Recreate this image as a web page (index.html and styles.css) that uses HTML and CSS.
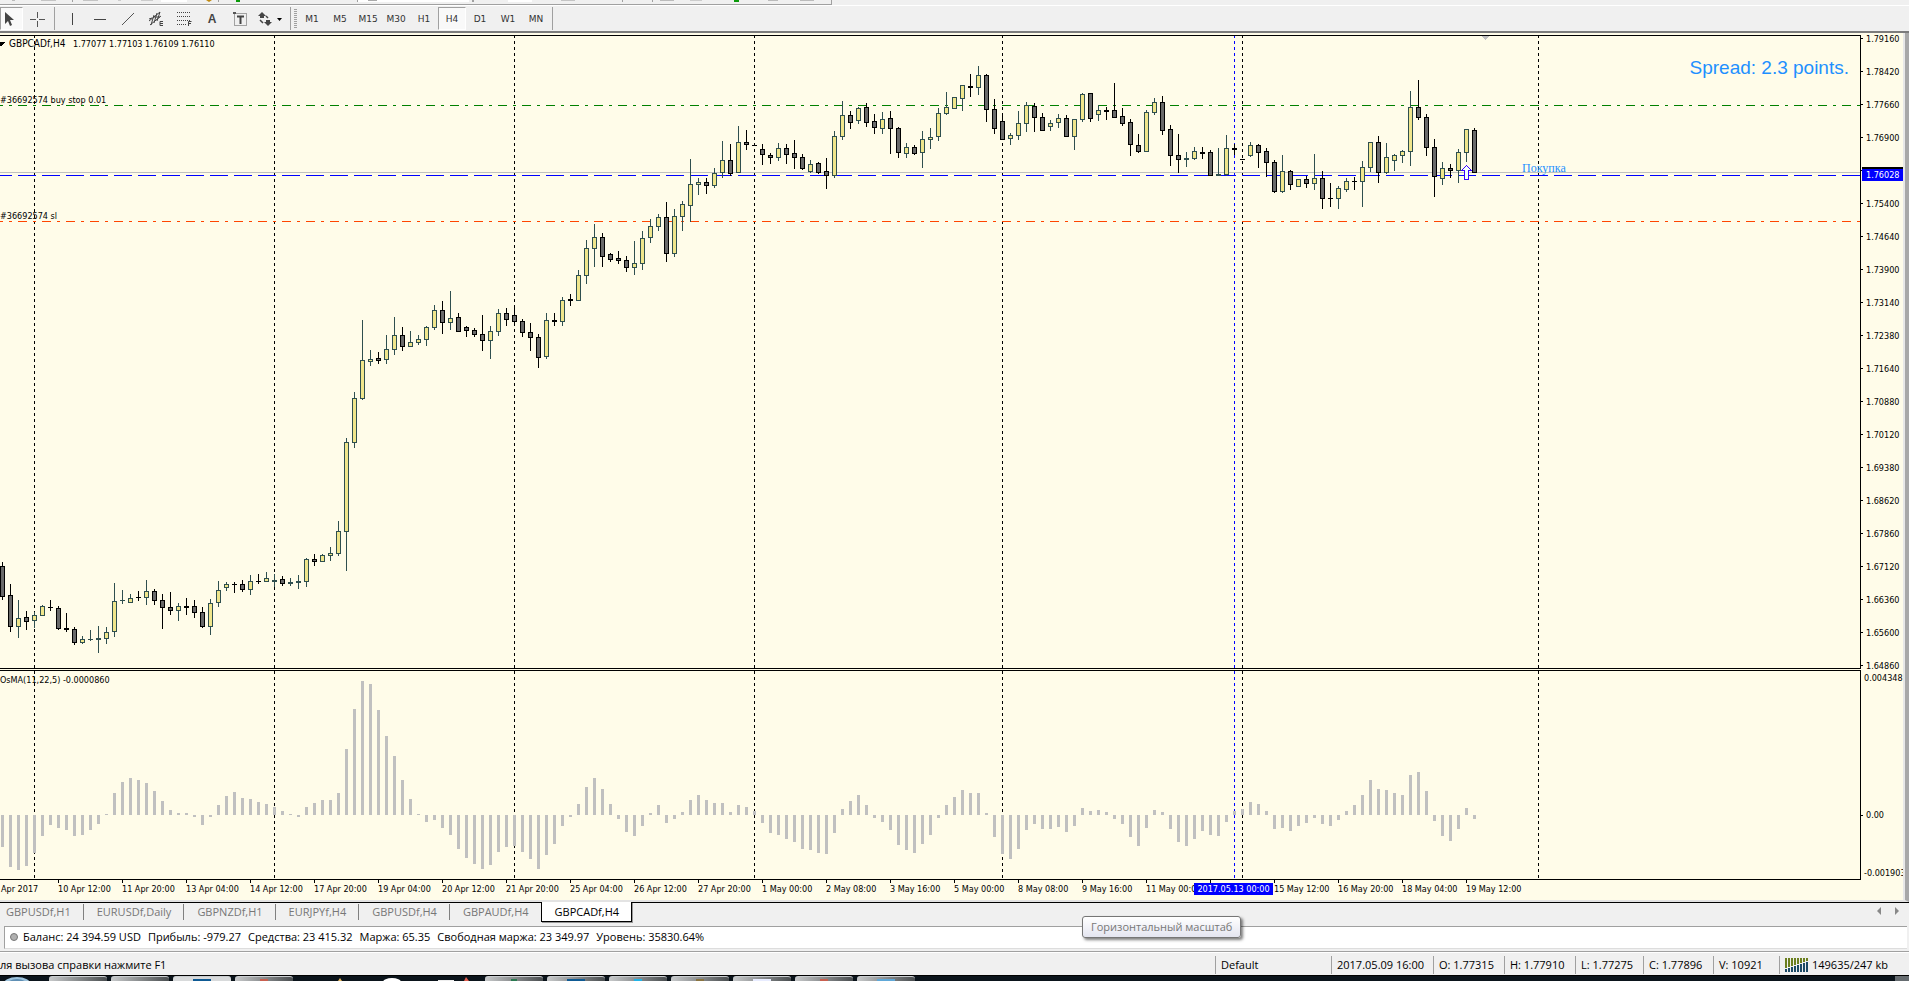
FILE: index.html
```html
<!DOCTYPE html>
<html lang="ru">
<head>
<meta charset="utf-8">
<title>GBPCADf,H4</title>
<link rel="stylesheet" href="styles.css">
</head>
<body>
<div class="upper-bar">
  <svg class="upper-marks" width="832" height="5" aria-hidden="true">
    <rect x="12" y="0" width="3" height="1" fill="#bbb"/><rect x="41" y="0" width="15" height="1" fill="#c4c4c4"/>
    <rect x="72" y="0" width="1" height="2" fill="#a0a0a0"/><rect x="83" y="0" width="15" height="1" fill="#c4c4c4"/>
    <rect x="118" y="0" width="3" height="1" fill="#ccc"/><rect x="141" y="0" width="12" height="1" fill="#ccc"/>
    <rect x="161" y="0" width="26" height="2" fill="#fff"/><path d="M206 0h6l-3 2z" fill="#c08a10"/>
    <rect x="218" y="0" width="1" height="2" fill="#a0a0a0"/><rect x="236" y="0" width="4" height="2" fill="#0a9a0a"/>
    <rect x="357" y="0" width="112" height="2" fill="#fff"/><rect x="357" y="0" width="1" height="2" fill="#a0a0a0"/>
    <rect x="368" y="0" width="9" height="1" fill="#aaa"/><rect x="472" y="0" width="2" height="2" fill="#a0a0a0"/>
    <rect x="508" y="0" width="24" height="2" fill="#fff"/><rect x="561" y="0" width="14" height="1" fill="#c4c4c4"/>
    <rect x="622" y="0" width="1" height="2" fill="#a0a0a0"/><rect x="652" y="0" width="1" height="2" fill="#a0a0a0"/>
    <rect x="660" y="0" width="14" height="1" fill="#bbb"/><rect x="690" y="0" width="12" height="1" fill="#ccc"/>
    <rect x="734" y="0" width="5" height="2" fill="#0a9a0a"/><rect x="768" y="0" width="10" height="1" fill="#bbb"/>
    <rect x="800" y="0" width="14" height="1" fill="#bbb"/>
  </svg>
</div>
<nav class="toolbar" aria-label="Инструменты">
  <button class="tool tool-first is-on" aria-label="Курсор"><svg width="16" height="16"><path d="M4 1v12l3-3 2 5 2-1-2-5h4z" fill="#444"/></svg></button>
  <button class="tool" aria-label="Перекрестие"><svg width="16" height="16"><path d="M8.500 1v6M8.500 10v6M1 8.500h6M10 8.500h6" stroke="#555"/></svg></button>
  <span class="divider first"></span>
  <button class="tool" aria-label="Вертикальная линия"><svg width="16" height="16"><path d="M8.500 2v12" stroke="#444"/></svg></button>
  <button class="tool" aria-label="Горизонтальная линия"><svg width="16" height="16"><path d="M2 8.500h12" stroke="#444"/></svg></button>
  <button class="tool" aria-label="Трендовая линия"><svg width="16" height="16"><path d="M2 14L14 2" stroke="#555"/></svg></button>
  <button class="tool" aria-label="Канал"><svg width="16" height="16"><path d="M1 10L12 1M2 14L13 5M3 14L6 4M6 12L9 2M9 10L12 1M1 8L4 7M5 6h7" stroke="#444" fill="none"/><path d="M15 10.500h-3v4h3M12 12.500h3" stroke="#444" fill="none"/></svg></button>
  <button class="tool" aria-label="Фибоначчи"><svg width="16" height="16"><path d="M1 1.500h13M1 5.500h13M1 9.500h13M1 13.500h9" stroke="#444" stroke-dasharray="1 1"/><path d="M12.500 15v-4.500h3M12 12.500h3" stroke="#444" fill="none"/></svg></button>
  <button class="tool letter" aria-label="Текст">A</button>
  <button class="tool" aria-label="Метка"><svg width="16" height="16"><rect x="2.500" y="2.500" width="12" height="12" fill="none" stroke="#555" stroke-dasharray="1 1"/><path d="M1 1h3v2h-3z" fill="#555"/><path d="M5 5.500h7M8.500 5v8" stroke="#444" stroke-width="2"/></svg></button>
  <button class="tool tool-wide" aria-label="Стрелки"><svg width="28" height="16"><path d="M5 1l4 4h-2v2h-4v-2h-2zM11 15l4-4h-2v-2h-4v2h-2z" fill="#444"/><path d="M3 9l3 3M9 5l2 2" stroke="#444" stroke-width="1.500"/><path d="M20 7h5l-2.500 3z" fill="#000"/></svg></button>
  <span class="divider"></span><span class="grip"></span>
  <button class="frame">M1</button><button class="frame">M5</button><button class="frame">M15</button><button class="frame">M30</button><button class="frame">H1</button><button class="frame is-on">H4</button><button class="frame">D1</button><button class="frame">W1</button><button class="frame">MN</button>
  <span class="divider"></span>
</nav>

<main class="chart">
  <svg class="pane price-pane" id="price" role="img" aria-label="GBPCADf,H4"></svg>
  <ol class="scale price-scale">
    <li>1.79160</li><li>1.78420</li><li>1.77660</li><li>1.76900</li><li class="current"><mark>1.76028</mark></li><li>1.75400</li><li>1.74640</li><li>1.73900</li><li>1.73140</li><li>1.72380</li><li>1.71640</li><li>1.70880</li><li>1.70120</li><li>1.69380</li><li>1.68620</li><li>1.67860</li><li>1.67120</li><li>1.66360</li><li>1.65600</li><li>1.64860</li>
  </ol>
  <svg class="pane" id="osma" role="img" aria-label="OsMA"></svg>
  <ol class="scale osma-scale"><li>0.004348</li><li class="zero">0.00</li><li>-0.001903</li></ol>
  <ol class="times">
    <li class="cut">Apr 2017</li><li>10 Apr 12:00</li><li>11 Apr 20:00</li><li>13 Apr 04:00</li><li>14 Apr 12:00</li><li>17 Apr 20:00</li><li>19 Apr 04:00</li><li>20 Apr 12:00</li><li>21 Apr 20:00</li><li>25 Apr 04:00</li><li>26 Apr 12:00</li><li>27 Apr 20:00</li><li>1 May 00:00</li><li>2 May 08:00</li><li>3 May 16:00</li><li>5 May 00:00</li><li>8 May 08:00</li><li>9 May 16:00</li><li>11 May 00:00</li><li class="cursor-time"><mark>2017.05.13 00:00</mark></li><li>15 May 12:00</li><li>16 May 20:00</li><li>18 May 04:00</li><li>19 May 12:00</li>
  </ol>
</main>

<nav class="tabs">
  <a href="#">GBPUSDf,H1</a><a href="#">EURUSDf,Daily</a><a href="#">GBPNZDf,H1</a><a href="#">EURJPYf,H4</a><a href="#">GBPUSDf,H4</a><a href="#">GBPAUDf,H4</a><a href="#" class="active">GBPCADf,H4</a>
  <span class="scrollers"><button aria-label="Назад"><svg width="5" height="8"><path d="M5 0v8L1 4z" fill="#888"/></svg></button><button aria-label="Вперёд"><svg width="5" height="8"><path d="M0 0v8l4-4z" fill="#888"/></svg></button></span>
  <span class="tooltip" role="tooltip">Горизонтальный масштаб</span>
</nav>

<section class="account">
  <span class="dot"></span>
  <span>Баланс: 24 394.59 USD</span><span>Прибыль: -979.27</span><span>Средства: 23 415.32</span><span>Маржа: 65.35</span><span>Свободная маржа: 23 349.97</span><span>Уровень: 35830.64%</span>
</section>

<footer class="status">
  <span class="help">ля вызова справки нажмите F1</span>
  <span>Default</span><span>2017.05.09 16:00</span><span>O: 1.77315</span><span>H: 1.77910</span><span>L: 1.77275</span><span>C: 1.77896</span><span>V: 10921</span>
  <span class="traffic"><svg width="24" height="14" shape-rendering="crispEdges" aria-hidden="true"><path d="M1 0v10M4 0v9M7 0v8M10 0v7M13 0v6M16 0v5M19 0v4M22 0v3" stroke="#6b7f1e" stroke-width="2"/><path d="M1 11v3M4 10v4M7 9v5M10 8v6M13 7v7M16 6v8M19 5v9M22 4v10" stroke="#1c4a66" stroke-width="2"/></svg>149635/247 kb</span>
</footer>

<div class="taskbar" aria-hidden="true">
  <svg class="orb" width="49" height="5"><ellipse cx="17" cy="9" rx="14" ry="8" fill="#9fc4dd"/><ellipse cx="17" cy="10" rx="11" ry="7" fill="#5f8fb4"/></svg>
  <i></i><i></i><i class="lit blue"></i><i class="red"></i>
  <svg class="loose" width="184" height="5"><path d="M41 5l2-3 2 3z" fill="#e8b860"/><ellipse cx="95" cy="6" rx="9" ry="4" fill="#fff"/><path d="M141 4h16v1h-16z" fill="#eee"/><path d="M167 5l2-4 3 4z" fill="#e46050"/></svg>
  <i class="green"></i><i class="blue"></i><i class="cyan"></i><i class="gold"></i><i class="pale"></i><i class="red"></i><i class="sky"></i>
  <b></b>
</div>
<script src="chart.js"></script>
</body>
</html>
```
FILE: styles.css
```css
* { box-sizing: border-box; }

body {
  margin: 0;
  height: 100vh;
  overflow: hidden;
  display: flex;
  flex-direction: column;
  background: #f0f0f0;
  color: #000;
  font: 11px/16px "Open Sans", "Noto Sans", sans-serif;
}

button { border: 0; padding: 0; background: none; font: inherit; color: inherit; }
ol { list-style: none; margin: 0; padding: 0; }
mark { color: #fff; background: #00f; }
svg { display: block; }

/* toolbars */
.upper-bar { flex: none; height: 5px; }
.upper-marks { border-bottom: 1px solid #a0a0a0; border-right: 1px solid #a0a0a0; }

.toolbar {
  flex: none;
  height: 28px;
  display: flex;
  align-items: center;
  border-top: 1px solid #fff;
  border-bottom: 2px solid #7c7c7c;
}
.tool {
  width: 28px;
  height: 23px;
  display: flex;
  align-items: center;
  justify-content: center;
}
.tool-first { width: 23px; justify-content: flex-start; }
.tool-wide { width: 34px; }
.letter { font: bold 12px/16px "Liberation Sans", sans-serif; color: #444; }
.frame {
  width: 28px;
  height: 23px;
  font: 9px/12px "DejaVu Sans", sans-serif;
  color: #333;
}
.is-on { background: #f9f9f9; border: 1px solid #fff; border-top-color: #a0a0a0; border-left-color: #a0a0a0; }
.divider { width: 1px; height: 23px; margin: 0 2px; background: #a0a0a0; }
.divider.first { margin: 0 3px; }
.grip { width: 3px; height: 20px; margin: 0 1px 0 1px; background: repeating-linear-gradient(#a0a0a0 0 1px, #f0f0f0 1px 2px); }

/* chart */
.chart {
  flex: 1;
  min-height: 0;
  display: grid;
  grid-template-columns: minmax(0, 1fr) 42px;
  grid-template-rows: minmax(0, 1fr) 1px 210px 20px;
  padding-top: 2px;
  background: #fffce9;
  border-right: 4px solid #a8a8a8;
  border-bottom: 2px solid #e3e3e3;
  box-shadow: inset -2px 0 #e8e8e8;
  padding-right: 2px;
  font: 9px/12px "DejaVu Sans Condensed", "DejaVu Sans", sans-serif;
}
.pane { width: 100%; height: 100%; border: 1px solid #000; border-left: 0; overflow: hidden; }
.price-pane { grid-area: 1 / 1; }
#osma { grid-area: 3 / 1; }
.pane text { font: 9px "DejaVu Sans Condensed", "DejaVu Sans", sans-serif; }
.pane .symbol { font-size: 10px; }
.pane .spread { font: 19px "Liberation Sans", Arial, sans-serif; fill: #1e90ff; }
.pane .note { font: 12px "Liberation Serif", serif; fill: #1e90ff; }

.scale { overflow: hidden; white-space: nowrap; }
.scale li { display: flex; align-items: center; gap: 3px; }
.scale li::before { content: ""; width: 2px; height: 1px; background: #000; }
.price-scale { grid-area: 1 / 2; margin-top: -13px; }
.price-scale li { height: 33px; }
.price-scale .current { position: relative; }
.current mark {
  position: absolute;
  left: 1px;
  right: 0;
  top: 13px;
  padding-left: 4px;
  border-top: 2px solid #000;
}
.osma-scale { grid-area: 3 / 2; display: flex; flex-direction: column; justify-content: space-between; padding: 2px 0 1px; }
.osma-scale li:not(.zero)::before { width: 0; }
.osma-scale .zero { padding-top: 78px; margin-bottom: -1px; }

.times {
  grid-area: 4 / 1 / 5 / 3;
  display: flex;
  overflow: hidden;
  white-space: nowrap;
}
.times li { flex: 0 0 64px; padding-left: 1px; }
.times li::before { content: ""; display: block; width: 1px; height: 3px; background: #000; }
.times .cut { flex-basis: 57px; }
.times .cut::before { background: none; }
.cursor-time { position: relative; }
.cursor-time mark { position: absolute; right: 0; top: 3px; width: 79px; text-align: center; }

/* chart tabs */
.tabs {
  position: relative;
  flex: none;
  height: 24px;
  display: flex;
  align-items: flex-start;
  border-top: 1px solid #000;
  color: #777;
}
.tabs a {
  color: inherit;
  text-decoration: none;
  line-height: 16px;
  padding: 0 12px 0 13px;
  margin-top: 1px;
  border-right: 1px solid #808080;
}
.tabs a:first-child { padding-left: 6px; }
.tabs a:nth-last-of-type(2) { border-right: 0; }
.tabs a.active {
  margin-top: -1px;
  padding-top: 2px;
  padding-bottom: 1px;
  color: #000;
  background: #fff;
  border: 1px solid #000;
  border-top: 0;
  box-shadow: 1px 1px #999;
}
.scrollers { display: flex; gap: 14px; margin-left: auto; padding: 4px 9px; }
.tooltip {
  position: absolute;
  left: 1082px;
  top: 13px;
  padding: 1px 8px;
  border: 1px solid #767676;
  border-radius: 3px;
  background: linear-gradient(#fff, #e4e5f0);
  box-shadow: 2px 2px 3px rgba(0, 0, 0, .5);
  line-height: 18px;
}

/* account and status */
.account {
  flex: none;
  height: 23px;
  margin: 0 2px 0 4px;
  padding: 0 0 2px 5px;
  display: flex;
  align-items: center;
  gap: 7px;
  background: #fff;
  border: 1px solid #a0a0a0;
  border-right: 0;
  border-bottom-color: #ddd;
}
.dot { width: 8px; height: 8px; margin-right: -2px; border-radius: 50%; background: #b0b0b0; border: 1px solid #777; }

.status {
  flex: none;
  height: 26px;
  display: grid;
  grid-template-columns: 1fr 116px 102px 71px 71px 68px 70px 66px 130px;
  align-items: center;
  background: linear-gradient(#f0f0f0 2px, #a0a0a0 2px 3px, #fff 3px 4px, #f0f0f0 4px);
  padding-top: 6px;
}
.status span { border-left: 1px solid #a0a0a0; padding-left: 5px; line-height: 18px; white-space: nowrap; }
.status .help { border: 0; padding: 0; }
.status .traffic { display: flex; align-items: center; gap: 3px; }

/* system taskbar */
.taskbar {
  flex: none;
  height: 6px;
  display: flex;
  gap: 4px;
  background: #0b141b;
  border-top: 1px solid #000;
}
.taskbar .orb { margin-right: -4px; }
.taskbar i { width: 58px; border-radius: 3px 3px 0 0; border-top: 1px solid #c8cccf; background: linear-gradient(90deg, #c8cacb, #4a4e50); }
.taskbar .lit { background: #d8dadb; }
.taskbar b { width: 14px; margin-left: auto; background: #666c70; }
.taskbar i::after { content: ""; display: block; width: 18px; height: 3px; margin: 2px auto 0; }
.taskbar .blue::after { background: #0e5a94; }
.taskbar .red::after { background: #c96050; width: 8px; }
.taskbar .green::after { background: #2a7a50; width: 6px; }
.taskbar .cyan::after { background: #20b4e8; width: 8px; }
.taskbar .gold::after { background: #8a7440; width: 8px; }
.taskbar .pale::after { background: #e8ecff; }
.taskbar .sky::after { background: #60a8d8; }
```
FILE: chart.js
```js
const NS = "http://www.w3.org/2000/svg";
const STEP = 8;

function add(parent, name, attrs, text) {
  const el = document.createElementNS(NS, name);
  for (const key in attrs) el.setAttribute(key, attrs[key]);
  if (text) el.textContent = text;
  parent.appendChild(el);
  return el;
}

// Each candle: direction, high, body top, body bottom, low (chart units).
const candles = `
d562,566,597,600 d584,595,627,632 u600,618,627,638 d611,617,622,630 u612,615,621,628 u605,606,616,616 d600,607,608,611 d606,608,629,630
d613,628,630,632 d627,629,643,645 u636,639,643,644 u630,639,640,641 u626,638,640,653 u627,632,639,644 u583,601,632,637 u590,600,601,604
u594,598,603,603 d591,597,598,601 u580,591,598,605 d589,591,601,605 d594,600,608,629 d592,607,611,615 u603,606,611,621 d598,606,608,615
d600,606,613,618 d607,612,627,628 u599,603,627,635 u581,590,603,607 u582,584,588,591 d582,584,585,593 d580,584,590,592 u575,581,590,595
d574,581,582,584 u572,578,582,582 u574,580,582,587 d576,579,584,586 u578,582,584,586 u575,581,583,589 u558,559,582,587 d554,559,562,566
u554,555,562,562 u547,553,556,561 u521,531,554,556 u438,442,532,571 u392,398,443,448 u320,360,399,400 u350,359,362,366 d352,358,361,364
u335,349,360,364 u317,335,350,355 d327,335,347,351 u331,342,347,347 u335,339,343,345 u326,327,340,346 u305,310,328,330 d301,310,323,334
u291,318,323,330 d313,317,332,332 d326,327,331,337 d328,330,335,337 d315,334,341,351 u326,331,341,359 u309,313,332,336 d308,313,320,326
d305,315,322,326 d319,321,333,337 d323,332,338,351 d334,337,358,368 u313,320,357,359 d313,320,322,326 u297,300,322,326 d294,299,301,306
u270,275,301,301 u240,248,276,284 u224,237,249,267 d233,237,257,267 d253,254,260,262 d251,258,261,264 d256,260,268,272 u241,263,268,275
u231,238,264,270 u219,226,238,243 u214,217,227,231 d202,217,254,262 u209,216,254,257 u201,204,217,231 u159,184,206,222 u178,182,185,195
d178,182,186,194 u168,173,186,188 u141,160,173,178 d144,160,174,176 u126,142,173,173 d130,142,145,150 d145,145,146,146 d144,149,155,165
d153,155,158,164 u143,148,158,161 d144,148,155,164 d140,153,158,169 d154,157,169,170 u160,164,172,173 d162,163,173,174 d158,171,176,189
u131,136,176,178 u101,115,137,140 d111,115,123,129 u107,108,121,124 d103,107,123,127 d114,121,128,134 u112,119,129,134 d111,118,129,154
d127,128,153,158 u143,147,154,158 d145,147,154,155 u131,139,153,168 u128,137,140,149 u108,113,137,141 u92,107,114,115 u97,97,109,109
u85,85,99,111 d74,86,88,97 u66,75,88,95 d74,75,110,122 d99,109,129,134 d113,121,140,140 u133,135,139,145 u111,123,136,140
u102,105,124,132 d103,106,118,132 d113,117,131,131 u120,123,127,131 u114,118,123,128 d115,118,137,137 u119,119,137,150 u93,94,120,122
d93,93,119,122 u105,110,115,121 d107,110,112,120 d83,110,118,118 d108,116,124,126 d119,122,145,156 d134,145,152,153 u110,112,152,152
u98,102,113,115 d96,102,131,135 d125,129,156,166 d134,155,160,173 u152,158,160,167 u147,151,159,160 d147,152,154,159 d150,152,176,176
u148,174,176,176 u135,148,175,176 d144,148,150,155 d159,159,160,160 u142,145,156,157 d144,145,153,168 d148,151,163,177 d160,162,192,193
u155,171,192,193 d170,171,185,190 u179,179,187,187 d176,179,184,188 u154,178,184,190 d171,178,199,209 d183,198,199,207 u186,188,199,209
u178,181,190,192 d177,181,182,190 u161,167,182,207 u142,142,168,172 d136,142,173,183 u143,157,173,174 u154,155,161,171 u150,151,156,163
u91,107,152,166 d80,107,118,120 d114,117,148,156 d139,147,177,197 u162,168,179,185 d164,168,171,178 u149,152,171,183 u129,129,153,162
d128,130,173,173`.trim().split(/\s+/);

const osma = [
  -32, -52, -55, -51, -38, -21, -10, -13, -15, -21, -20, -15, -9, 1, 22, 33, 37, 35, 32, 24,
  14, 5, 2, 2, -2, -10, -2, 10, 19, 23, 17, 16, 13, 11, 8, 4, 1, -2, 8, 12,
  15, 15, 22, 66, 106, 134, 131, 105, 79, 59, 35, 16, 1, -7, -5, -13, -20, -34, -43, -49,
  -54, -50, -37, -32, -31, -37, -44, -54, -40, -29, -11, -2, 11, 28, 37, 26, 11, -4, -17, -21,
  -11, 2, 10, -8, -4, 3, 15, 20, 15, 12, 12, 3, 10, 8, 4, -8, -18, -20, -24, -27,
  -34, -35, -38, -39, -18, 6, 14, 20, 10, -3, -7, -15, -30, -35, -38, -29, -20, -3, 10, 18,
  25, 22, 22, 2, -22, -39, -44, -34, -15, -9, -14, -14, -12, -17, -11, 7, 4, 5, 3, -4,
  -9, -22, -31, -13, 5, 3, -14, -27, -31, -24, -16, -20, -21, -7, 4, 6, 13, 11, 4, -14,
  -13, -16, -11, -8, -3, -9, -11, -5, 4, 10, 20, 35, 26, 25, 22, 20, 40, 43, 24, -6,
  -21, -26, -14, 7, -4
];

const weeks = [34, 274, 514, 754, 1002, 1242, 1538];
const cursorX = 1234;

function verticals(g, top, bottom) {
  for (const x of weeks) {
    add(g, "line", { x1: x + 0.5, x2: x + 0.5, y1: top, y2: bottom, stroke: "#000", "stroke-dasharray": "3 3" });
  }
  add(g, "line", { x1: cursorX + 0.5, x2: cursorX + 0.5, y1: top, y2: bottom, stroke: "#00f", "stroke-dasharray": "3 3" });
}

function level(g, y, color, dash) {
  add(g, "line", { x1: -6, x2: 4000, y1: y + 0.5, y2: y + 0.5, stroke: color, "stroke-dasharray": dash });
}

// Price pane
const price = add(document.getElementById("price"), "g", { transform: "translate(0 -36)", "shape-rendering": "crispEdges" });
verticals(price, 35, 2000);
level(price, 172, "#c0c0c0", "none");
level(price, 105, "#008000", "9 6 3 6");
level(price, 175, "#0000ff", "18 6");
level(price, 221, "#ff4500", "9 6 3 6");

candles.forEach((code, i) => {
  const x = 2 + i * STEP;
  const up = code[0] === "u";
  const [high, top, bottom, low] = code.slice(1).split(",").map(Number);
  const edge = up ? "#2f4f4f" : "#000";
  add(price, "rect", { x, y: high, width: 1, height: low - high, fill: edge });
  add(price, "rect", { x: x - 2, y: top, width: 5, height: bottom - top, fill: edge });
  if (bottom - top > 2) {
    add(price, "rect", { x: x - 1, y: top + 1, width: 3, height: bottom - top - 2, fill: up ? "#f0e68c" : "#696969" });
  }
});

add(price, "path", { d: "M1466.500 165.500l5 5h-3v9h-4v-9h-3z", fill: "#f4ffff", stroke: "#3a00ff" });
add(price, "path", { d: "M0 42h5l-3 4h-2z", fill: "#000" });
add(price, "path", { d: "M1481 36h8l-4 4z", fill: "#c0c0c0" });
add(price, "text", { x: 9, y: 47, class: "symbol" }, "GBPCADf,H4");
add(price, "text", { x: 73, y: 47 }, "1.77077 1.77103 1.76109 1.76110");
add(price, "text", { x: 0, y: 103 }, "#36692574 buy stop 0.01");
add(price, "text", { x: 0, y: 219 }, "#36692574 sl");
add(price, "text", { x: 1522, y: 172, class: "note" }, "Покупка");
add(price, "text", { x: 1849, y: 74, "text-anchor": "end", class: "spread" }, "Spread: 2.3 points.");

// Indicator pane
const lower = add(document.getElementById("osma"), "g", { transform: "translate(0 -671)", "shape-rendering": "crispEdges" });
verticals(lower, 671, 879);
osma.forEach((value, i) => {
  const height = Math.abs(value);
  add(lower, "rect", { x: 1 + i * STEP, y: value > 0 ? 815 - height : 815, width: 3, height, fill: "#c0c0c0" });
});
add(lower, "text", { x: 0, y: 683 }, "OsMA(11,22,5) -0.0000860");
```
